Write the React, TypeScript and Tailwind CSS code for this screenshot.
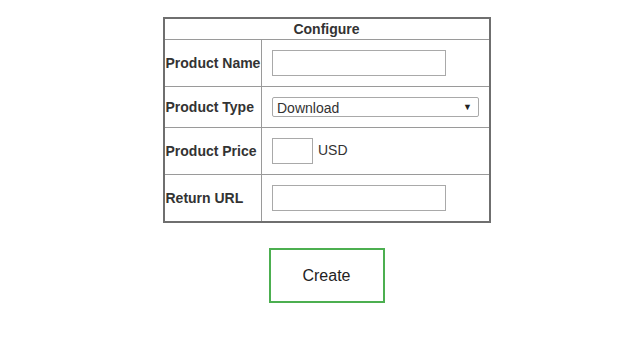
import { useState } from 'react'

// 設定フォーム（商品名・種別・価格・戻りURL）
export default function App() {
  const [type, setType] = useState('Download')

  return (
    <div className="w-[627px] h-[343px] bg-white font-['Liberation_Sans',Arial,sans-serif] text-[#333]">
      <div className="pt-[17px] flex justify-center pl-[26px]">
        <table className="w-[328px] border-collapse border-2 border-[#6f6f6f] text-[14px]">
          <thead>
            <tr className="h-[21px]">
              <th colSpan={2} className="border border-[#9a9a9a] font-bold text-center leading-[17px] pt-[1px]">
                Configure
              </th>
            </tr>
          </thead>
          <tbody>
            <tr className="h-[47px]">
              <td className="w-[98px] border border-[#9a9a9a] font-bold pl-[1px] pt-[2px] whitespace-nowrap">Product Name</td>
              <td className="border border-[#9a9a9a] pl-[10px]">
                <input className="block w-[174px] h-[26px] border border-[#a9a9a9] outline-none" />
              </td>
            </tr>
            <tr className="h-[41px]">
              <td className="border border-[#9a9a9a] font-bold pl-[1px] pt-[2px]">Product Type</td>
              <td className="border border-[#9a9a9a] pl-[10px]">
                <div className="relative w-[207px] h-[20px] border border-[#a9a9a9] rounded-[2px]">
                  <select
                    value={type}
                    onChange={(e) => setType(e.target.value)}
                    className="appearance-none w-full h-full bg-transparent pl-[4px] text-[14px] text-[#333] outline-none"
                  >
                    <option>Download</option>
                    <option>Shipping</option>
                  </select>
                  <span className="absolute right-[6px] top-[3px] text-[9px] text-[#222] pointer-events-none">▼</span>
                </div>
              </td>
            </tr>
            <tr className="h-[47px]">
              <td className="border border-[#9a9a9a] font-bold pl-[1px] pt-[2px]">Product Price</td>
              <td className="border border-[#9a9a9a] pl-[10px]">
                <div className="flex items-center gap-[5px]">
                  <input className="block w-[41px] h-[26px] border border-[#a9a9a9] outline-none" />
                  <span className="text-[14px]">USD</span>
                </div>
              </td>
            </tr>
            <tr className="h-[48px]">
              <td className="border border-[#9a9a9a] font-bold pl-[1px] pt-[2px]">Return URL</td>
              <td className="border border-[#9a9a9a] pl-[10px]">
                <input className="block w-[174px] h-[26px] border border-[#a9a9a9] outline-none" />
              </td>
            </tr>
          </tbody>
        </table>
      </div>

      <div className="flex justify-center mt-[25px] pl-[26px]">
        <button className="w-[116px] h-[55px] border-2 border-[#4caf50] bg-white text-[16px] text-[#222]">
          Create
        </button>
      </div>
    </div>
  )
}
